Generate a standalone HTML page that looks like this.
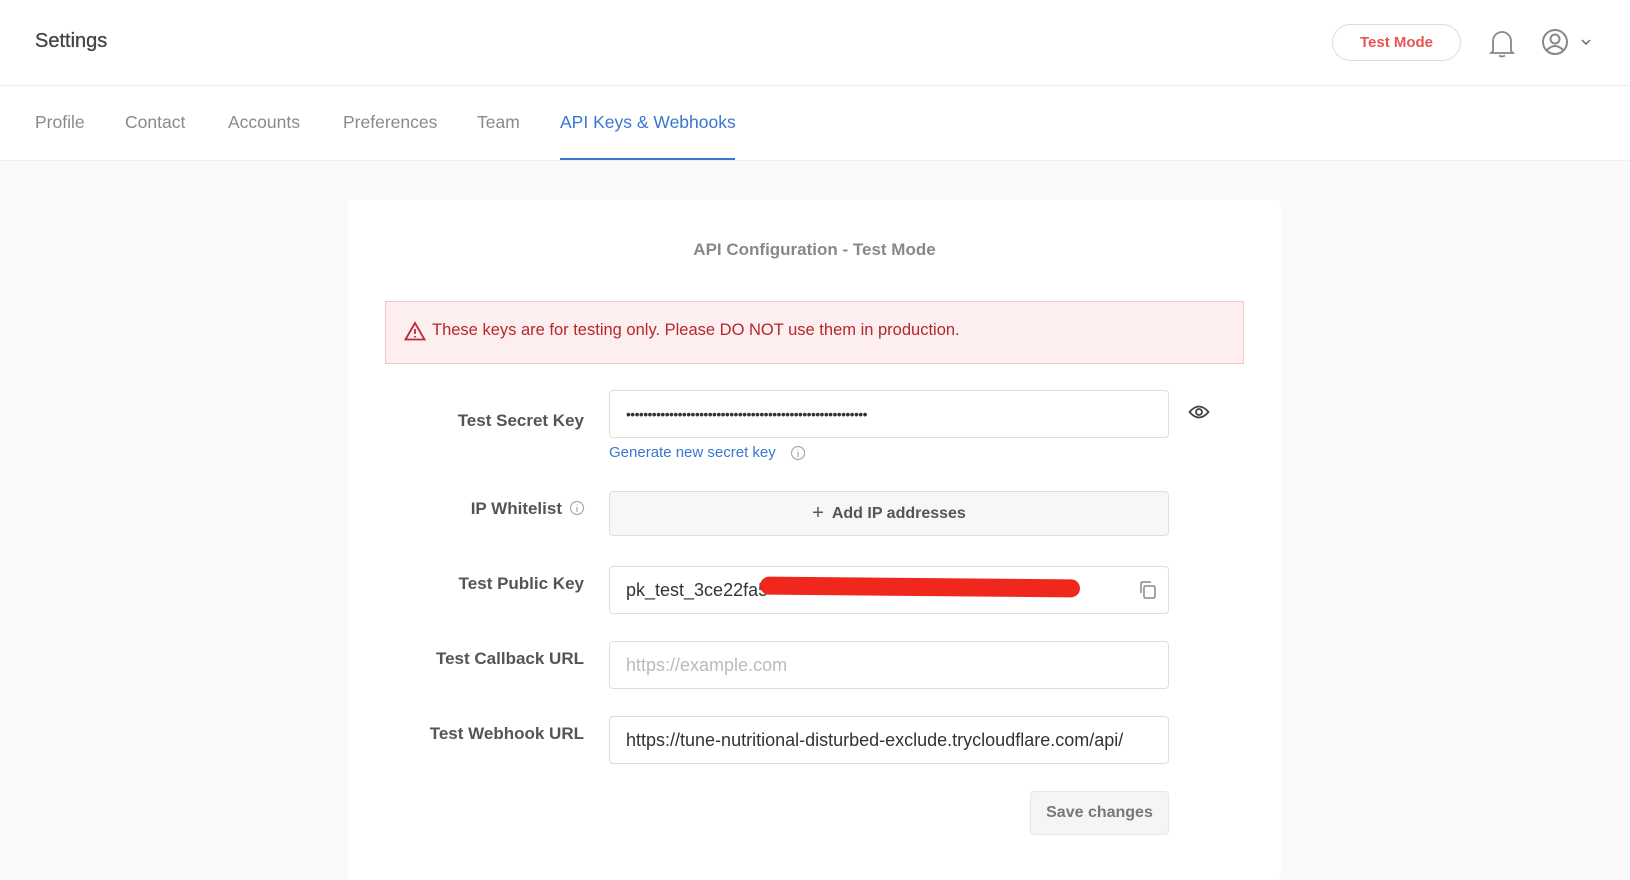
<!DOCTYPE html>
<html><head><meta charset="utf-8"><style>
*{box-sizing:border-box;margin:0;padding:0}
body{width:1630px;height:871px;overflow:hidden;background:#fafafa;font-family:"Liberation Sans",sans-serif;position:relative;color:#444}
.a{position:absolute}
#hdr{left:0;top:0;width:1630px;height:86px;background:#fff;border-bottom:1px solid #ececec}
#tabs{left:0;top:86px;width:1630px;height:75px;background:#fff;border-bottom:1px solid #efefef}
.tab{top:112px;font-size:17.5px;color:#8a8a8a;white-space:nowrap}
#card{left:348px;top:200px;width:933px;height:680px;background:#fff;border-radius:4px}
.lbl{right:calc(1630px - 584px);font-size:17px;font-weight:bold;color:#555;text-align:right;white-space:nowrap}
.inp{left:609px;width:560px;height:48px;border:1px solid #dedede;border-radius:4px;background:#fff;font-size:18px;color:#333;padding:0 16px;display:flex;align-items:center;white-space:nowrap;overflow:hidden}
</style></head><body>
<div id="hdr" class="a"></div>
<div class="a" style="left:35px;top:30px;font-size:20px;color:#444;-webkit-text-stroke:0.3px #444">Settings</div>
<div class="a" style="left:1332px;top:24px;width:129px;height:37px;border:1px solid #ddd;border-radius:19px;color:#e85555;font-size:15px;font-weight:bold;display:flex;align-items:center;justify-content:center">Test Mode</div>
<svg class="a" style="left:1488px;top:28px" width="28" height="30" viewBox="0 0 28 30" fill="none" stroke="#888" stroke-width="1.8"><path d="M5 23V13a9 9 0 0 1 18 0v10l2 2H3z"/><path d="M11 27.5q3 2 6 0"/></svg>
<svg class="a" style="left:1541px;top:28px" width="28" height="28" viewBox="0 0 28 28" fill="none" stroke="#888" stroke-width="2"><circle cx="14" cy="14" r="12"/><circle cx="14" cy="11" r="4.5"/><path d="M6 22q8-8 16 0"/></svg>
<svg class="a" style="left:1581px;top:38px" width="10" height="8" viewBox="0 0 10 8" fill="none" stroke="#666" stroke-width="1.5"><path d="M1 2l4 4 4-4"/></svg>
<div id="tabs" class="a"></div>
<div class="a tab" style="left:35px">Profile</div>
<div class="a tab" style="left:125px">Contact</div>
<div class="a tab" style="left:228px">Accounts</div>
<div class="a tab" style="left:343px">Preferences</div>
<div class="a tab" style="left:477px">Team</div>
<div class="a tab" style="left:560px;color:#3a76d0">API Keys &amp; Webhooks</div>
<div class="a" style="left:560px;top:158px;width:175px;height:2px;background:#3a76d0"></div>
<div id="card" class="a"></div>
<div class="a" style="left:348px;width:933px;top:240px;text-align:center;font-size:17px;font-weight:bold;color:#888">API Configuration - Test Mode</div>
<div class="a" style="left:385px;top:301px;width:859px;height:63px;background:#fdeef0;border:1px solid #f5c5c8"></div>
<svg class="a" style="left:404px;top:321px" width="22" height="20" viewBox="0 0 22 20" fill="none" stroke="#c0282e" stroke-width="1.8"><path d="M11 2L1.5 18.5h19z"/><path d="M11 8v5M11 15v1.5"/></svg>
<div class="a" style="left:432px;top:321px;font-size:16.5px;color:#b5272d">These keys are for testing only. Please DO NOT use them in production.</div>
<div class="a lbl" style="top:411px">Test Secret Key</div>
<div class="a inp" style="top:390px;font-size:14px;letter-spacing:-0.6px">••••••••••••••••••••••••••••••••••••••••••••••••••••••••</div>
<svg class="a" style="left:1188px;top:403px" width="22" height="18" viewBox="0 0 22 18" fill="none" stroke="#444" stroke-width="1.8"><path d="M1.5 9Q11-2 20.5 9 11 20 1.5 9z"/><circle cx="11" cy="9" r="3"/></svg>
<div class="a" style="left:609px;top:444px;font-size:15px;color:#3a76d0">Generate new secret key</div>
<svg class="a" style="left:790px;top:445px" width="16" height="16" viewBox="0 0 16 16" fill="none" stroke="#aaa" stroke-width="1.2"><circle cx="8" cy="8" r="6.5"/><path d="M8 7v5M8 4.5v1"/></svg>
<div class="a lbl" style="top:499px;right:1068px">IP Whitelist</div>
<svg class="a" style="left:569px;top:500px" width="16" height="16" viewBox="0 0 16 16" fill="none" stroke="#aaa" stroke-width="1.2"><circle cx="8" cy="8" r="6.5"/><path d="M8 7v5M8 4.5v1"/></svg>
<div class="a inp" style="top:491px;height:45px;background:#f7f7f7;justify-content:center;font-size:16px;font-weight:bold;color:#555"><span style="font-weight:normal;font-size:20px;margin-right:8px">+</span>Add IP addresses</div>
<div class="a lbl" style="top:574px">Test Public Key</div>
<div class="a inp" style="top:566px">pk_test_3ce22fa5</div>
<div class="a" style="left:760px;top:578px;width:320px;height:18px;background:#f0271c;border-radius:9px;transform:rotate(0.5deg)"></div>
<svg class="a" style="left:1138px;top:580px" width="20" height="20" viewBox="0 0 20 20" fill="none" stroke="#888" stroke-width="1.5"><rect x="6" y="6" width="11" height="12" rx="1.5"/><path d="M3 13V3.5A1.5 1.5 0 0 1 4.5 2H13"/></svg>
<div class="a lbl" style="top:649px">Test Callback URL</div>
<div class="a inp" style="top:641px;color:#bbb">https://example.com</div>
<div class="a lbl" style="top:724px">Test Webhook URL</div>
<div class="a inp" style="top:716px">https://tune-nutritional-disturbed-exclude.trycloudflare.com/api/</div>
<div class="a" style="left:1030px;top:791px;width:139px;height:44px;background:#f5f5f5;border:1px solid #e8e8e8;border-radius:4px;font-size:16px;font-weight:bold;color:#777;display:flex;align-items:center;justify-content:center">Save changes</div>
</body></html>
